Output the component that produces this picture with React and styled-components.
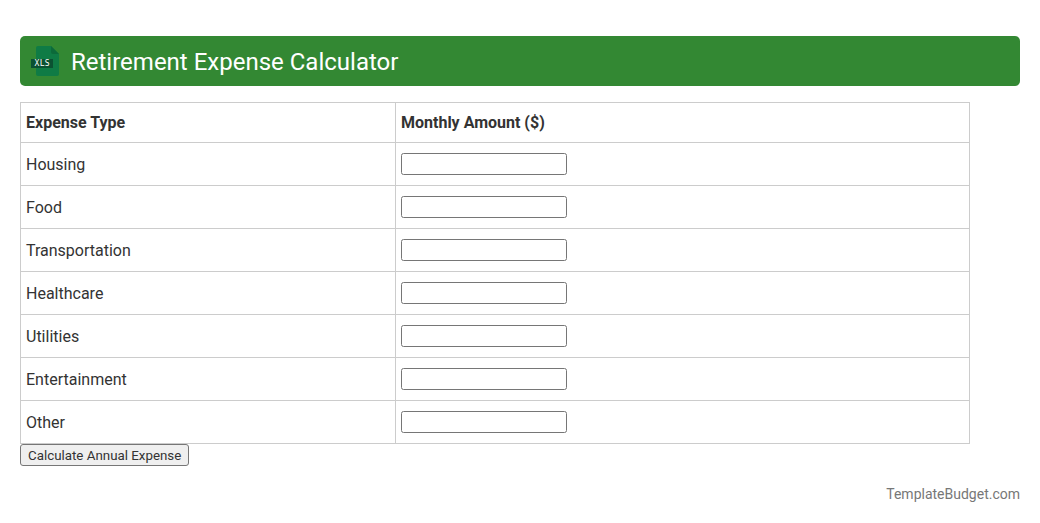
import React from 'react';
import styled, { createGlobalStyle } from 'styled-components';

const GlobalStyle = createGlobalStyle`
    body {
        margin: 0;
        background-color: #fff;
        font-family: Roboto, "Liberation Sans", sans-serif;
        font-size: 16px;
        color: #333;
    }
`;

const Page = styled.div`
    padding: 36px 20px 0;
`;

const Header = styled.h1`
    display: flex;
    align-items: center;
    height: 50px;
    margin: 0 0 16px;
    padding-left: 10px;
    border-radius: 5px;
    background-color: #338833;
    color: #fff;
    font-size: 24px;
    font-weight: 400;
`;

const Logo = styled.svg`
    width: 30px;
    height: 30px;
    margin-right: 11px;
    flex-shrink: 0;
`;

const Title = styled.span`
    margin-top: 2px;
`;

const Table = styled.table`
    width: 950px;
    border-collapse: collapse;
    table-layout: fixed;
`;

const HeadCell = styled.th`
    height: 40px;
    padding: 0 5px;
    border: 1px solid #ccc;
    text-align: left;
    font-weight: 700;
    box-sizing: border-box;
`;

const Cell = styled.td`
    height: 43px;
    padding: 0 5px;
    border: 1px solid #ccc;
    box-sizing: border-box;
`;

const AmountInput = styled.input.attrs({ type: 'number' })`
    display: block;
    width: 166px;
    height: 22px;
    box-sizing: border-box;
    padding: 1px 2px;
    border: 1px solid #767676;
    border-radius: 2.5px;
    background-color: #fff;
    appearance: textfield;
`;

const CalcButton = styled.button`
    display: block;
    height: 22px;
    padding: 1px 7px;
    border: 1px solid #767676;
    border-radius: 3px;
    background-color: #efefef;
    color: #333;
    font-family: Roboto, "Liberation Sans", sans-serif;
    font-size: 13.33px;
`;

const Footer = styled.div`
    margin-top: 20px;
    text-align: right;
    font-size: 14px;
    color: #777;
`;

const expenses = ['Housing', 'Food', 'Transportation', 'Healthcare', 'Utilities', 'Entertainment', 'Other'];

export default function App() {
    return (
        <Page>
            <GlobalStyle />
            <Header>
                <Logo viewBox="0 0 30 30">
                    <path d="M8 0h13l8 8v20a2 2 0 0 1-2 2H8a2 2 0 0 1-2-2V2a2 2 0 0 1 2-2z" fill="#0f7b45" />
                    <path d="M21 0l8 8h-6a2 2 0 0 1-2-2z" fill="#0c6a3a" />
                    <rect x="1" y="13" width="22" height="9" fill="#0b5132" />
                    <text x="12.3" y="20.4" textAnchor="middle" fontFamily="DejaVu Sans Mono, monospace" fontSize="8" letterSpacing="0.3" fill="#fff">XLS</text>
                </Logo>
                <Title>Retirement Expense Calculator</Title>
            </Header>
            <Table>
                <colgroup>
                    <col style={{ width: 375 }} />
                    <col />
                </colgroup>
                <thead>
                    <tr>
                        <HeadCell>Expense Type</HeadCell>
                        <HeadCell>Monthly Amount ($)</HeadCell>
                    </tr>
                </thead>
                <tbody>
                    {expenses.map(name => (
                        <tr key={name}>
                            <Cell>{name}</Cell>
                            <Cell><AmountInput /></Cell>
                        </tr>
                    ))}
                </tbody>
            </Table>
            <CalcButton>Calculate Annual Expense</CalcButton>
            <Footer>TemplateBudget.com</Footer>
        </Page>
    );
}
